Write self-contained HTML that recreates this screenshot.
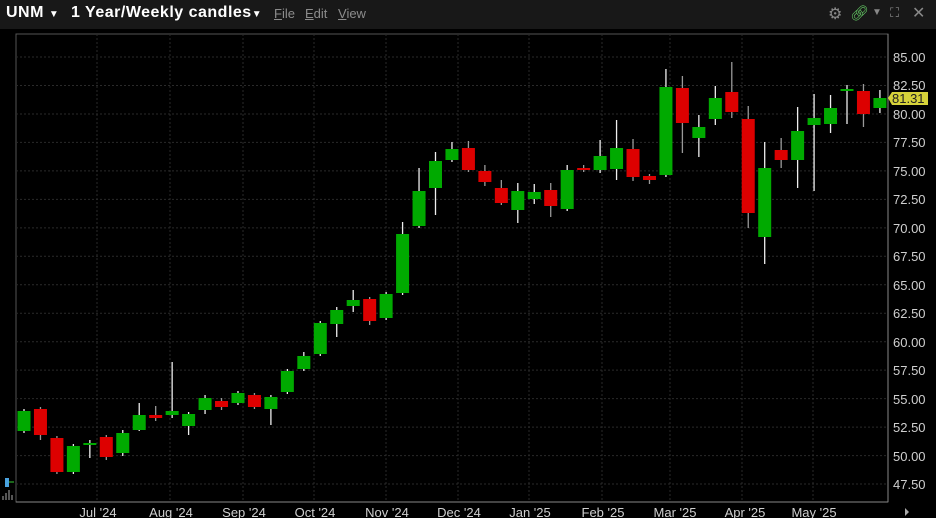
<!DOCTYPE html>
<html><head><meta charset="utf-8"><style>
html,body{margin:0;padding:0;background:#000;width:936px;height:518px;overflow:hidden;font-family:"Liberation Sans",sans-serif}
#hdr{position:absolute;left:0;top:0;width:936px;height:29px;background:#181818}
#hdr .t{position:absolute;top:4px;color:#fff;font-weight:bold;font-size:16px;letter-spacing:0.5px}
#hdr .m{position:absolute;top:6px;color:#8c8c8c;font-size:13px}
#hdr .m u{text-decoration:underline}
svg{position:absolute;left:0;top:0}
</style></head><body>
<div id="hdr">
<span class="t" style="left:6px">UNM <span style="font-size:10px">▼</span></span>
<span class="t" style="left:71px">1 Year/Weekly candles<span style="font-size:10px">▼</span></span>
<span class="m" style="left:274px"><u>F</u>ile</span>
<span class="m" style="left:305px"><u>E</u>dit</span>
<span class="m" style="left:338px"><u>V</u>iew</span>
<span class="m" style="left:828px;top:4px;font-size:16px;color:#888">⚙</span>
<span class="m" style="left:850px;top:4px;font-size:15px;color:#6c6">🔗︎</span>
<span class="m" style="left:872px;top:7px;font-size:10px;color:#888">▼</span>
<span class="m" style="left:890px;top:5px;font-size:13px;color:#888">⛶</span>
<span class="m" style="left:912px;top:3px;font-size:16px;color:#888">✕</span>
</div>
<svg id="c" width="936" height="518" xmlns="http://www.w3.org/2000/svg">
<rect x="16" y="34" width="872" height="468" fill="#000" stroke="#555" stroke-width="1"/>
<g id="grid"></g>
<g id="cand"></g>
<line x1="888" y1="34" x2="888" y2="502" stroke="#888"/>
<line x1="16" y1="502" x2="888" y2="502" stroke="#888"/>
<g fill="#cfcfcf" font-size="13" font-family="Liberation Sans,sans-serif">
<text x="893" y="62">85.00</text>
<text x="893" y="90">82.50</text>
<text x="893" y="119">80.00</text>
<text x="893" y="147">77.50</text>
<text x="893" y="176">75.00</text>
<text x="893" y="204">72.50</text>
<text x="893" y="233">70.00</text>
<text x="893" y="261">67.50</text>
<text x="893" y="290">65.00</text>
<text x="893" y="318">62.50</text>
<text x="893" y="347">60.00</text>
<text x="893" y="375">57.50</text>
<text x="893" y="404">55.00</text>
<text x="893" y="432">52.50</text>
<text x="893" y="461">50.00</text>
<text x="893" y="489">47.50</text>
</g>
<polygon points="888,98 892,92 928,92 928,105 892,105" fill="#d6d23a"/>
<text x="892" y="103" font-size="13" fill="#222" font-family="Liberation Sans,sans-serif">81.31</text>
<g fill="#cfcfcf" font-size="13" font-family="Liberation Sans,sans-serif" text-anchor="middle">
<text x="98" y="517">Jul '24</text>
<text x="171" y="517">Aug '24</text>
<text x="244" y="517">Sep '24</text>
<text x="315" y="517">Oct '24</text>
<text x="387" y="517">Nov '24</text>
<text x="459" y="517">Dec '24</text>
<text x="530" y="517">Jan '25</text>
<text x="603" y="517">Feb '25</text>
<text x="675" y="517">Mar '25</text>
<text x="745" y="517">Apr '25</text>
<text x="814" y="517">May '25</text>
</g>
<polygon points="905,508 909,512 905,516" fill="#aaa"/>
<rect x="5" y="478" width="4" height="9" fill="#4aa3df"/>
<line x1="9" y1="482" x2="14" y2="482" stroke="#3c3"/>
<g stroke="#aaa"><line x1="3" y1="500" x2="3" y2="496"/><line x1="6" y1="500" x2="6" y2="493"/><line x1="9" y1="500" x2="9" y2="490"/><line x1="12" y1="500" x2="12" y2="495"/></g>
</svg>
<script>
var ns="http://www.w3.org/2000/svg";
function el(p,t,a){var e=document.createElementNS(ns,t);for(var k in a)e.setAttribute(k,a[k]);p.appendChild(e);return e;}
var g=document.getElementById('grid');
for(var i=0;i<16;i++){var y=57+i*28.47;el(g,'line',{x1:16,x2:888,y1:y,y2:y,stroke:'#2a2a2a','stroke-dasharray':'2,2'});}
[97,170,243,314,386,458,529,602,670,742,813].forEach(function(x){el(g,'line',{x1:x,x2:x,y1:34,y2:502,stroke:'#2a2a2a','stroke-dasharray':'2,2'});});
var d=[
['g',411,431,409,433],['r',409,435,407,440],['r',438,472,436,474],['g',446,472,444,474],['g',443,444,440,458],
['r',437,457,435,460],['g',433,453,430,456],['g',415,430,403,431],['r',415,418,406,421],['g',411,415,362,418],
['g',414,426,412,435],['g',398,410,395,414],['r',401,407,398,410],['g',393,403,391,405],['r',395,407,393,409],
['g',397,409,395,425],['g',371,392,369,394],['g',356,369,352,371],['g',323,354,321,356],['g',310,324,307,337],
['g',300,306,290,312],['r',299,321,297,325],['g',294,318,292,320],['g',234,293,222,295],['g',191,226,168,228],
['g',161,188,152,215],['g',149,160,142,162],['r',148,170,141,172],['r',171,182,165,186],['r',188,203,180,205],
['g',191,210,183,223],['g',192,199,184,204],['r',190,206,183,217],['g',170,209,165,211],['r',168,170,165,172],
['g',156,170,140,173],['g',148,169,120,180],['r',149,177,139,181],['r',176,180,174,184],['g',87,175,69,177],
['r',88,123,76,153],['g',127,138,115,157],['g',98,119,86,125],['r',92,112,62,118],['r',119,213,106,228],
['g',168,237,142,264],['r',150,160,138,168],['g',131,160,107,188],['g',118,125,94,191],['g',108,124,95,133],
['g',89,91,85,124],['r',91,114,84,127],['g',98,108,90,113]];
var c=document.getElementById('cand');
d.forEach(function(v,i){var x=24+i*16.46;var col=v[0]=='g'?'#00aa00':'#dd0000';
el(c,'line',{x1:x,x2:x,y1:v[3],y2:v[4],stroke:v[0]=='g'?'#eee':'#999','stroke-width':1.3});
el(c,'rect',{x:x-6.5,y:v[1],width:13,height:Math.max(2,v[2]-v[1]),fill:col});});
</script>
</body></html>
